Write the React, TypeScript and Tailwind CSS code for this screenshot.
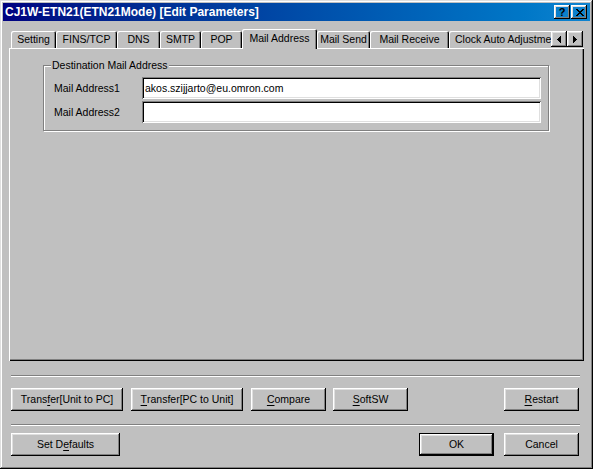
const raised =
  "shadow-[inset_-1px_-1px_#000,inset_1px_1px_#fff,inset_-2px_-2px_#808080,inset_2px_2px_#dfdfdf]";
const sunken =
  "shadow-[inset_1px_1px_#808080,inset_-1px_-1px_#fff,inset_2px_2px_#000,inset_-2px_-2px_#dfdfdf]";
const tabEdge = "shadow-[inset_1px_1px_#fff,inset_-1px_0_#000,inset_-2px_0_#808080]";

const tabs = [
  { label: "Setting", w: "w-[45px]" },
  { label: "FINS/TCP", w: "w-[61px]" },
  { label: "DNS", w: "w-[43px]" },
  { label: "SMTP", w: "w-[41px]" },
  { label: "POP", w: "w-[41px]" },
  { label: "Mail Address", w: "w-[75px]", active: true },
  { label: "Mail Send", w: "w-[53px]" },
  { label: "Mail Receive", w: "w-[79px]" },
  { label: "Clock Auto Adjustment", w: "w-[130px]", clipped: true },
];

function Key({ children }: { children: string }) {
  return <span className="underline underline-offset-[2px]">{children}</span>;
}

function Button({
  w,
  children,
  isDefault,
}: {
  w: string;
  children: React.ReactNode;
  isDefault?: boolean;
}) {
  if (isDefault) {
    return (
      <div className={`${w} h-[23px] border border-black`}>
        <div className={`h-full flex items-center justify-center ${raised}`}>{children}</div>
      </div>
    );
  }
  return <div className={`${w} h-[23px] flex items-center justify-center ${raised}`}>{children}</div>;
}

function Separator() {
  return <div className="ml-[8px] mr-[10px] h-[2px] border-t border-b border-t-[#808080] border-b-white" />;
}

export default function App() {
  return (
    <div className="w-[593px] h-[469px] bg-[#c0c0c0] p-[3px] text-[10.5px] leading-none text-black font-['Liberation_Sans',Arial,sans-serif] shadow-[inset_-1px_-1px_#000,inset_1px_1px_#dfdfdf,inset_-2px_-2px_#808080,inset_2px_2px_#fff] flex flex-col">
      {/* title bar */}
      <div className="h-[18px] flex items-center pl-[2px] pr-[3px] bg-linear-to-r from-[#000080] to-[#1084d0]">
        <span className="text-[12px] font-bold text-white">CJ1W-ETN21(ETN21Mode) [Edit Parameters]</span>
        <div className="ml-auto flex gap-[1px]">
          <div className={`w-[16px] h-[14px] flex items-center justify-center text-[11px] font-bold pt-[1px] ${raised}`}>
            ?
          </div>
          <div className={`w-[16px] h-[14px] flex items-center justify-center pl-[1px] ${raised}`}>
            <svg width="8" height="7" viewBox="0 0 8 7" shapeRendering="crispEdges">
              <path
                d="M0 0h2v1H0zM6 0h2v1H6zM1 1h2v1H1zM5 1h2v1H5zM2 2h4v1H2zM3 3h2v1H3zM2 4h4v1H2zM1 5h2v1H1zM5 5h2v1H5zM0 6h2v1H0zM6 6h2v1H6z"
                fill="#000"
              />
            </svg>
          </div>
        </div>
      </div>

      {/* tabs */}
      <div className="mx-[6px] mt-[8px] relative z-10 -mb-px flex h-[20px] pl-[2px]">
        <div className="w-[540px] overflow-hidden flex items-end">
          {tabs.map((t) =>
            t.active ? (
              <div
                key={t.label}
                className={`${t.w} shrink-0 h-[20px] bg-[#c0c0c0] rounded-t-[2px] flex items-center justify-center pb-[1px] ${tabEdge}`}
              >
                {t.label}
              </div>
            ) : (
              <div
                key={t.label}
                className={`${t.w} shrink-0 h-[17px] mb-[1px] rounded-t-[2px] flex items-center whitespace-nowrap ${t.clipped ? "justify-start pl-[6px]" : "justify-center"} ${tabEdge}`}
              >
                {t.label}
              </div>
            ),
          )}
        </div>
        <div className="mt-[2px] flex h-[16px]">
          <div className={`w-[16px] h-[16px] flex items-center justify-center ${raised}`}>
            <svg width="4" height="7" viewBox="0 0 4 7" shapeRendering="crispEdges">
              <path d="M3 0h1v7H3zM2 1h1v5H2zM1 2h1v3H1zM0 3h1v1H0z" fill="#000" />
            </svg>
          </div>
          <div className={`w-[16px] h-[16px] flex items-center justify-center ${raised}`}>
            <svg width="4" height="7" viewBox="0 0 4 7" shapeRendering="crispEdges">
              <path d="M0 0h1v7H0zM1 1h1v5H1zM2 2h1v3H2zM3 3h1v1H3z" fill="#000" />
            </svg>
          </div>
        </div>
      </div>

      {/* panel */}
      <div className="mx-[6px] h-[313px] bg-[#c0c0c0] pt-[17px] pl-[34px] shadow-[inset_1px_1px_#fff,inset_-1px_-1px_#000,inset_-2px_-2px_#808080]">
        <div className="relative w-[506px] h-[66px] border border-[#808080] shadow-[inset_1px_1px_#fff,1px_1px_#fff] pt-[11px] pl-[10px]">
          <span className="absolute -top-[7px] left-[7px] px-[1px] bg-[#c0c0c0] leading-[13px]">
            Destination Mail Address
          </span>
          <div className="flex flex-col gap-[2px]">
            <div className="flex items-center">
              <span className="w-[88px]">Mail Address1</span>
              <div className={`w-[399px] h-[22px] bg-white flex items-center px-[3px] ${sunken}`}>
                akos.szijjarto@eu.omron.com
              </div>
            </div>
            <div className="flex items-center">
              <span className="w-[88px]">Mail Address2</span>
              <div className={`w-[399px] h-[22px] bg-white ${sunken}`} />
            </div>
          </div>
        </div>
      </div>

      {/* bottom buttons */}
      <div className="mt-[14px]">
        <Separator />
      </div>
      <div className="mt-[11px] ml-[8px] mr-[11px] flex gap-[8px]">
        <Button w="w-[112px]">
          Trans<Key>f</Key>er[Unit to PC]
        </Button>
        <Button w="w-[112px]">
          <Key>T</Key>ransfer[PC to Unit]
        </Button>
        <Button w="w-[75px]">
          <Key>C</Key>ompare
        </Button>
        <div className="-ml-px">
          <Button w="w-[75px]">
            <Key>S</Key>oftSW
          </Button>
        </div>
        <div className="ml-auto">
          <Button w="w-[75px]">
            <Key>R</Key>estart
          </Button>
        </div>
      </div>
      <div className="mt-[13px]">
        <Separator />
      </div>
      <div className="mt-[7px] ml-[8px] mr-[11px] flex">
        <Button w="w-[109px]">
          Set D<Key>e</Key>faults
        </Button>
        <div className="ml-auto flex gap-[10px]">
          <Button w="w-[75px]" isDefault>
            OK
          </Button>
          <Button w="w-[75px]">Cancel</Button>
        </div>
      </div>
    </div>
  );
}
